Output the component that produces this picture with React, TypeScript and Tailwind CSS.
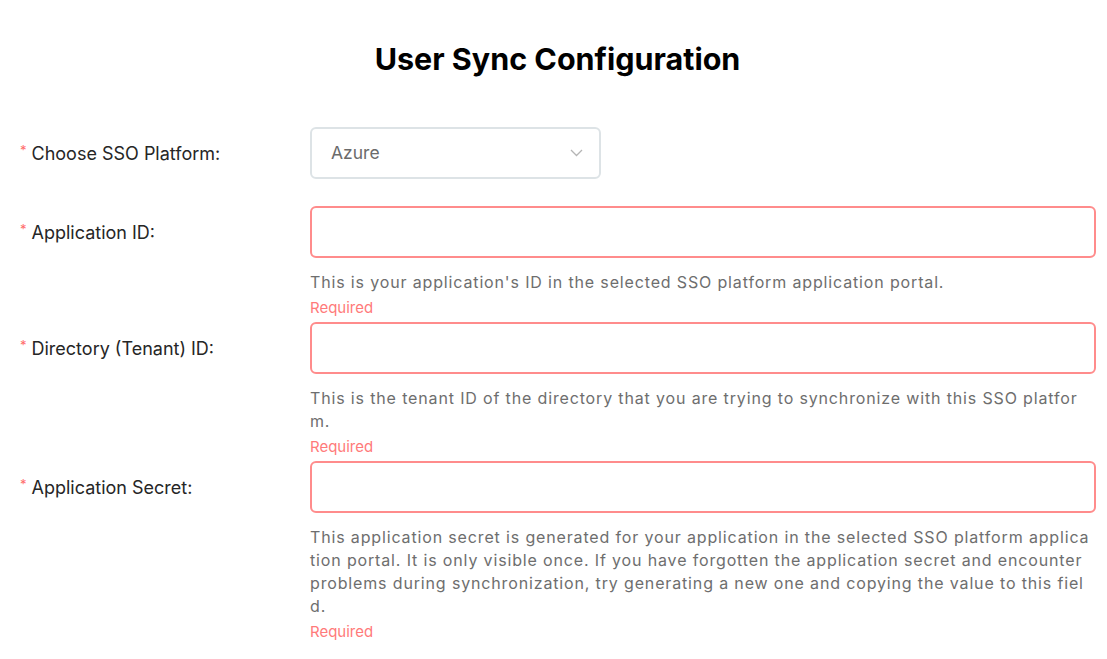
import React from "react";

const font = { fontFamily: 'Inter, "Liberation Sans", Arial, sans-serif' };

function Label({ text }: { text: string }) {
  return (
    <div className="w-[310px] shrink-0 h-[52px] flex items-center pl-[20px] text-[18px] text-[#262626]">
      <span className="text-[#ff6b6b] text-[13px] mr-[5px] -mt-[4px]">*</span>
      <span>{text}</span>
    </div>
  );
}

function Field({ label, help }: { label: string; help: string[] }) {
  return (
    <div className="flex">
      <Label text={label} />
      <div className="w-[786px] shrink-0">
        <div className="h-[52px] rounded-[6px] border-2 border-[#ff8c8c] bg-white" />
        <div className="mt-[13px] text-[16px] leading-[23px] tracking-[0.85px] text-[#6e6e6e]">
          {help.map((line, i) => (
            <div key={i} className="whitespace-nowrap">
              {line}
            </div>
          ))}
        </div>
        <div className="mt-[2px] mb-[2px] h-[24px] leading-[24px] text-[15px] text-[#ff7a7a]">
          Required
        </div>
      </div>
    </div>
  );
}

export default function App() {
  return (
    <div className="w-[1107px] h-[659px] bg-white overflow-hidden" style={font}>
      <div className="w-[1095px]">
        <h1 className="mt-[39px] h-[40px] leading-[40px] text-center text-[30.5px] font-bold text-black pl-[20px]">
          User Sync Configuration
        </h1>
        <div className="mt-[48px] flex mb-[27px]">
          <Label text="Choose SSO Platform:" />
          <div className="w-[291px] h-[52px] rounded-[6px] border-2 border-[#dde3e6] flex items-center justify-between pl-[19px] pr-[16px] text-[17.5px] text-[#6b6b6b]">
            <span>Azure</span>
            <svg width="13" height="8" viewBox="0 0 13 8" fill="none">
              <path d="M1 1l5.5 5.5 5.5-5.5" stroke="#b5b5b5" strokeWidth="1.3" />
            </svg>
          </div>
        </div>
        <Field
          label="Application ID:"
          help={["This is your application's ID in the selected SSO platform application portal."]}
        />
        <Field
          label="Directory (Tenant) ID:"
          help={[
            "This is the tenant ID of the directory that you are trying to synchronize with this SSO platfor",
            "m.",
          ]}
        />
        <Field
          label="Application Secret:"
          help={[
            "This application secret is generated for your application in the selected SSO platform applica",
            "tion portal. It is only visible once. If you have forgotten the application secret and encounter",
            "problems during synchronization, try generating a new one and copying the value to this fiel",
            "d.",
          ]}
        />
      </div>
    </div>
  );
}
